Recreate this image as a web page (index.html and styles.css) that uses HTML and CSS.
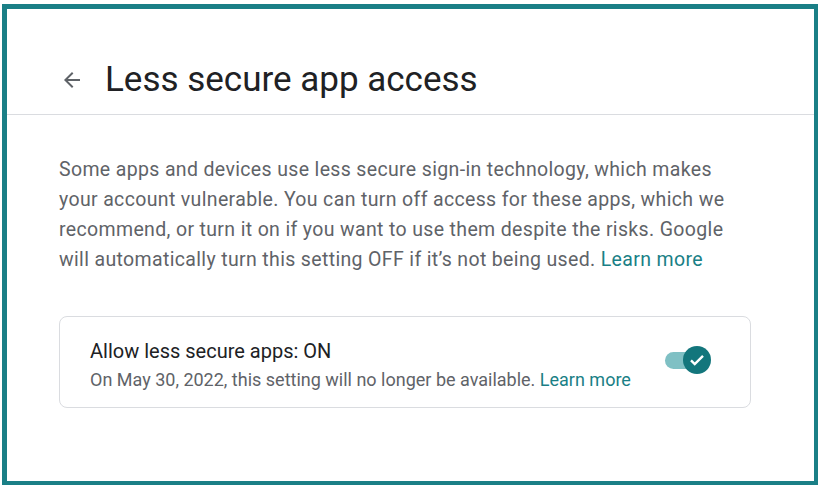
FILE: index.html
```html
<!DOCTYPE html>
<html>
<head>
<meta charset="utf-8">
<link rel="stylesheet" href="styles.css">
</head>
<body>
<div class="frame">
  <header class="head">
    <svg class="back" width="24" height="24" viewBox="0 0 24 24"><path d="M20 11H7.83l5.59-5.59L12 4l-8 8 8 8 1.41-1.41L7.83 13H20v-2z" fill="#5f6368"/></svg>
    <h1 class="title">Less secure app access</h1>
  </header>
  <main class="body">
    <p class="intro">Some apps and devices use less secure sign-in technology, which makes your account vulnerable. You can turn off access for these apps, which we recommend, or turn it on if you want to use them despite the risks. Google will automatically turn this setting OFF if it’s not being used. <a class="link">Learn more</a></p>
    <div class="card">
      <div class="card-text">
        <div class="card-title">Allow less secure apps: ON</div>
        <div class="card-sub">On May 30, 2022, this setting will no longer be available. <a class="link">Learn more</a></div>
      </div>
      <div class="toggle">
        <div class="track"></div>
        <div class="knob">
          <svg width="18" height="18" viewBox="0 0 24 24"><path d="M4 12.5l5 5L20 6.5" fill="none" stroke="#fff" stroke-width="3.2"/></svg>
        </div>
      </div>
    </div>
  </main>
</div>
</body>
</html>
```
FILE: styles.css
```css
html, body { margin: 0; padding: 0; background: #fff; }
body { width: 823px; height: 490px; padding: 4px 0 0 2px; box-sizing: border-box; font-family: Roboto, "Noto Sans", Arial, sans-serif; }
.frame {
  width: 816px; height: 481px; box-sizing: border-box;
  border: 5px solid #1a7f86;
  border-right-width: 4px; border-bottom-width: 4px;
  position: relative;
}
.head {
  height: 106px; box-sizing: border-box;
  border-bottom: 1px solid #dadce0;
  display: flex; align-items: flex-start;
  padding: 51px 0 0 53px;
}
.back { width: 24px; height: 24px; margin-top: 8px; }
.title {
  margin: 0 0 0 21px; font-weight: 400; font-size: 35px; line-height: 40px;
  color: #202124; letter-spacing: 0;
}
.body { padding: 40px 0 0 52px; width: 692px; }
.intro {
  margin: 0; width: 680px; font-size: 19.5px; line-height: 30px; color: #5f6368; letter-spacing: 0.35px;
}
.link { color: #1a7f86; }
.card {
  margin-top: 41px; height: 92px; box-sizing: border-box; width: 692px;
  border: 1px solid #dadce0; border-radius: 8px;
  display: flex; align-items: center; justify-content: space-between;
  padding: 0 38px 0 30px;
}
.card-text { padding-top: 6px; }
.card-title { font-size: 20px; line-height: 26px; color: #202124; margin-top: 0; }
.card-sub { font-size: 18px; line-height: 24px; color: #5f6368; margin-top: 4px; }
.toggle { position: relative; width: 48px; height: 28px; margin-top: -4px; }
.track { position: absolute; left: 1px; top: 6px; width: 38px; height: 17px; border-radius: 9px; background: #7fc0c4; }
.knob {
  position: absolute; left: 19px; top: 0; width: 28px; height: 28px; border-radius: 50%;
  background: #13767c; display: flex; align-items: center; justify-content: center;
}
```
